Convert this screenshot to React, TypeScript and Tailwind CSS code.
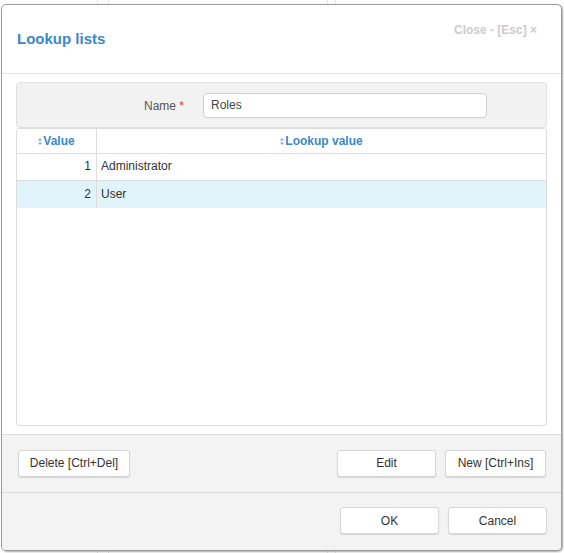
import React from "react";

function SortIcon() {
  return (
    <svg width="4" height="7" viewBox="0 0 4 7" className="inline-block mr-[1px] align-middle">
      <path d="M2 0 L4 2.5 L0 2.5 Z" fill="#7aa9cf" />
      <path d="M2 7 L4 4.5 L0 4.5 Z" fill="#7aa9cf" />
    </svg>
  );
}

function Btn({ children, w }: { children: React.ReactNode; w: string }) {
  return (
    <button
      className={`${w} h-[27px] bg-white border border-[#d6d6d6] rounded-[3px] shadow-[0_1px_1px_rgba(0,0,0,0.12)] text-[12px] text-[#333] leading-none`}
    >
      {children}
    </button>
  );
}

export default function App() {
  return (
    <div
      className="relative w-[564px] h-[553px] bg-white overflow-hidden"
      style={{ fontFamily: '"Liberation Sans", Arial, sans-serif' }}
    >
      {/* faint background lines behind the dialog */}
      <div className="absolute left-[97px] top-0 h-full w-px bg-[#e6e6e6]" />
      <div className="absolute left-[108px] top-0 h-full w-px bg-[#e6e6e6]" />
      <div className="absolute left-[327px] top-0 h-full w-px bg-[#e6e6e6]" />
      <div className="absolute left-[335px] top-0 h-full w-px bg-[#e6e6e6]" />

      <div className="relative ml-[1px] mt-[4px] w-[561px] h-[547px] bg-white border border-[#9a9a9a] rounded-[5px] shadow-[1px_1px_2px_rgba(0,0,0,0.35)] flex flex-col overflow-hidden">
        {/* header */}
        <div className="relative h-[69px] shrink-0 border-b border-[#e5e5e5] px-[15px] pt-[24px]">
          <div className="text-[15px] leading-[20px] font-bold text-[#3b88c3]">Lookup lists</div>
          <div className="absolute right-[24px] top-[17px] text-[12px] leading-[16px] font-bold text-[#cccccc]">
            Close - [Esc] ×
          </div>
        </div>

        {/* body */}
        <div className="flex-1 min-h-0 flex flex-col px-[14px] pt-[8px] pb-[8px]">
          <div className="h-[46px] shrink-0 bg-[#f2f2f2] border border-[#e0e0e0] rounded-[4px] flex items-center">
            <div className="w-[167px] text-right text-[12px] text-[#555] pt-[1px]">
              Name <span className="text-[#e2332f]">*</span>
            </div>
            <div className="ml-[19px] w-[284px] h-[25px] bg-white border border-[#cfcfcf] rounded-[4px] flex items-center px-[7px] text-[12px] text-[#444]">
              Roles
            </div>
          </div>
          <div className="flex-1 border border-[#dddddd] rounded-b-[4px] rounded-t-[3px] bg-white overflow-hidden">
            <div className="flex h-[25px] border-b border-[#dddddd] text-[12px] font-bold text-[#3b88c3]">
              <div className="w-[80px] border-r border-[#dddddd] flex items-center justify-center">
                <SortIcon />Value
              </div>
              <div className="flex-1 flex items-center justify-center">
                <SortIcon />Lookup value
              </div>
            </div>
            <div className="flex h-[27px] border-b border-[#dddddd] text-[12px] text-[#333]">
              <div className="w-[80px] border-r border-[#dddddd] flex items-center justify-end pr-[5px] pb-[2px]">1</div>
              <div className="flex-1 flex items-center pl-[4px] pb-[2px]">Administrator</div>
            </div>
            <div className="flex h-[27px] bg-[#e1f4fc] text-[12px] text-[#333]">
              <div className="w-[80px] border-r border-[#dddddd] flex items-center justify-end pr-[5px] pb-[2px]">2</div>
              <div className="flex-1 flex items-center pl-[4px] pb-[2px]">User</div>
            </div>
          </div>
        </div>

        {/* footer 1 */}
        <div className="h-[58px] shrink-0 bg-[#f3f3f3] border-t border-[#dddddd] flex items-center pl-[16px] pr-[15px] pb-[1px]">
          <Btn w="w-[112px]">Delete [Ctrl+Del]</Btn>
          <div className="flex-1" />
          <Btn w="w-[99px]">Edit</Btn>
          <div className="w-[9px]" />
          <Btn w="w-[101px]">New [Ctrl+Ins]</Btn>
        </div>

        {/* footer 2 */}
        <div className="h-[58px] shrink-0 bg-[#f3f3f3] border-t border-[#dddddd] flex items-center justify-end px-[14px] pb-[2px]">
          <Btn w="w-[99px]">OK</Btn>
          <div className="w-[9px]" />
          <Btn w="w-[99px]">Cancel</Btn>
        </div>
      </div>
    </div>
  );
}
